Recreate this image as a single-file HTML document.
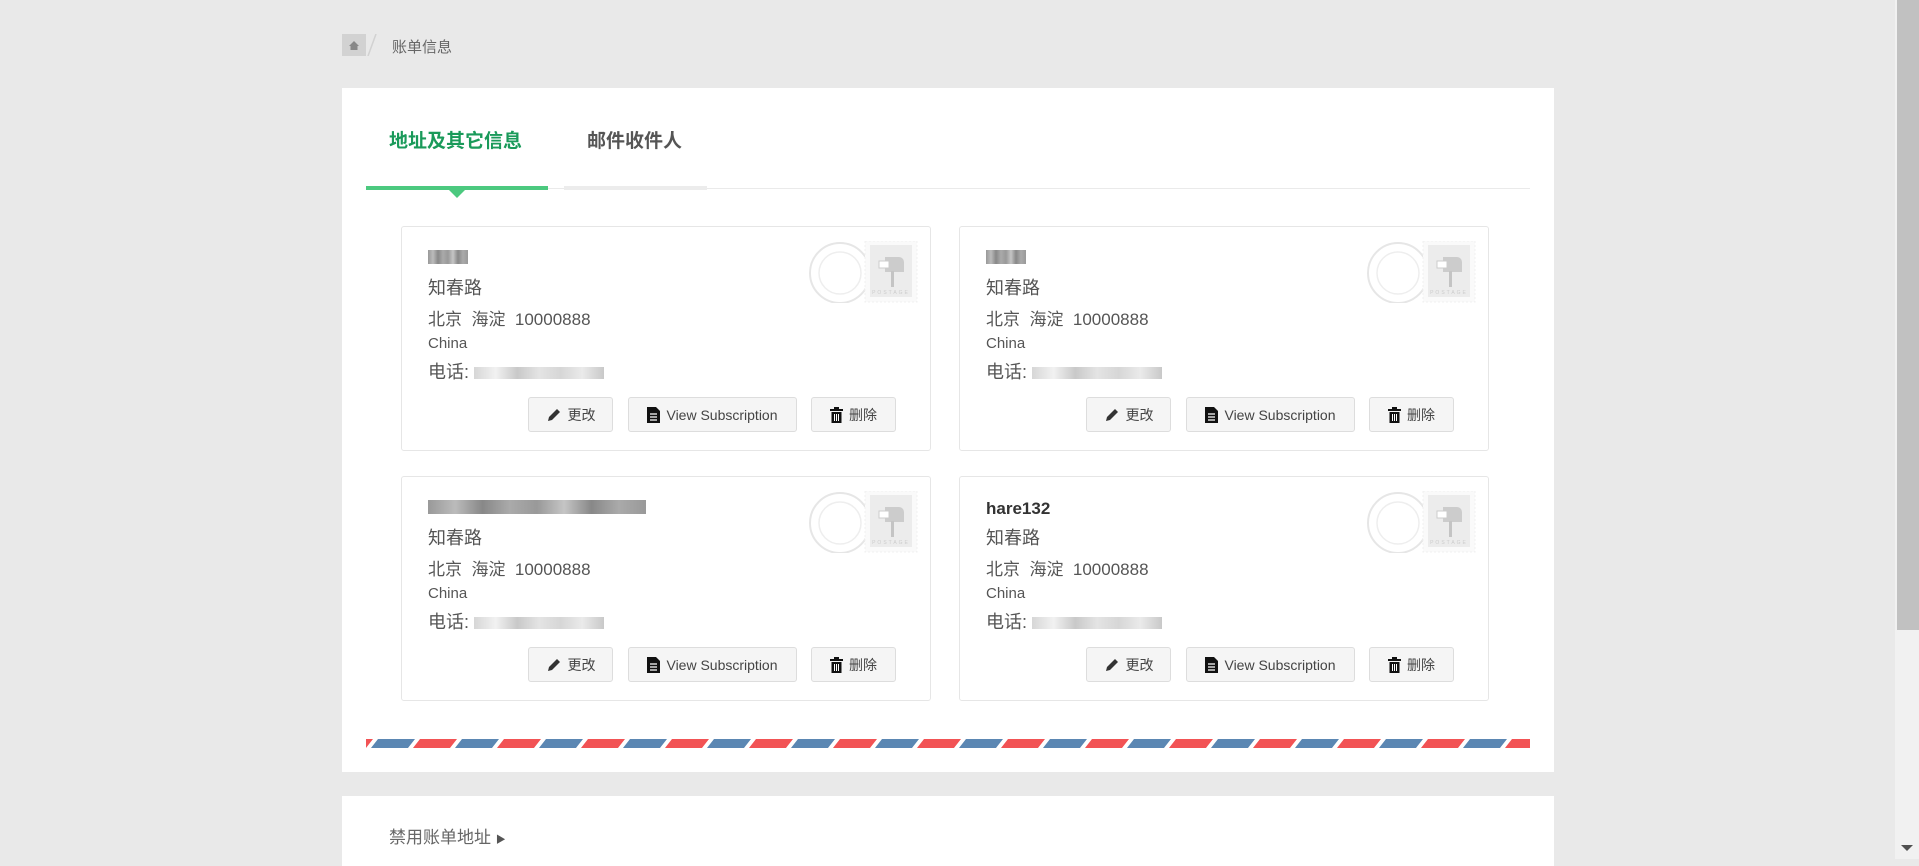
<!DOCTYPE html>
<html><head><meta charset="utf-8"><style>
*{margin:0;padding:0;box-sizing:border-box}
body{width:1919px;height:859px;overflow:hidden;background:#e9e9e9;font-family:"Liberation Sans","Noto Sans CJK SC",sans-serif;color:#555;position:relative}
.abs{position:absolute}
.home{left:342px;top:34px;width:24px;height:22px;background:#d2d2d2}
.crumb{left:392px;top:36px;font-size:15px;color:#666}
.panel{left:342px;top:88px;width:1212px;height:684px;background:#fff}
.panel2{left:342px;top:796px;width:1212px;height:70px;background:#fff}
.tab{top:126px;font-size:19px;font-weight:bold}
.card{width:530px;height:225px;border:1px solid #e6e6e6;border-radius:3px;background:#fff}
.card .t{position:absolute;left:26px;color:#555}
.btn{position:absolute;top:170px;height:35px;border:1px solid #ddd;border-radius:3px;background:#f5f5f5;font-size:14px;color:#444;display:flex;align-items:center;justify-content:center;gap:6px}
.blur{display:inline-block;height:12px;background:linear-gradient(90deg,#ccc,#eee,#bbb,#ddd,#ccc,#e5e5e5,#bbb);opacity:.8}
.nb{display:inline-block;height:14px;background:linear-gradient(90deg,#999,#bbb,#888,#aaa,#999,#c5c5c5,#888,#aaa,#999)}
.sb{left:1895px;top:0;width:24px;height:859px;background:#f1f1f1}
</style></head><body>
<div class="abs home"><svg width="24" height="22"><path d="M7 12 L12 7 L17 12 H15.5 V16 H8.5 V12 Z" fill="#888"/></svg></div>
<svg class="abs" style="left:366px;top:34px" width="12" height="22"><line x1="10" y1="0" x2="2" y2="22" stroke="#d2d2d2" stroke-width="1.5"/></svg>
<div class="abs crumb">账单信息</div>
<div class="abs panel"></div>
<div class="abs tab" style="left:389px;color:#1a9a5a">地址及其它信息</div>
<div class="abs tab" style="left:587px;color:#555">邮件收件人</div>
<div class="abs" style="left:366px;top:188px;width:1164px;height:1px;background:#eaeaea"></div>
<div class="abs" style="left:366px;top:186px;width:182px;height:4px;background:#4cc97f"></div>
<div class="abs" style="left:564px;top:186px;width:143px;height:4px;background:#ececec"></div>
<svg class="abs" style="left:448px;top:189px" width="18" height="9"><path d="M0 0 L18 0 L9 9 Z" fill="#4cc97f"/></svg>

<div id="cards"></div>
<script>
var pos=[[401,226,0],[959,226,1],[401,476,2],[959,476,3]];
var names=['<span class="nb" style="width:40px"></span>','<span class="nb" style="width:40px"></span>','<span class="nb" style="width:218px"></span>','<b style="font-size:17px;color:#333">hare132</b>'];
var h='';
pos.forEach(function(p){
h+='<div class="abs card" style="left:'+p[0]+'px;top:'+p[1]+'px">'+
'<div class="t" style="top:22px;font-size:17px">'+names[p[2]]+'</div>'+
'<div class="t" style="top:47px;font-size:18px">知春路</div>'+
'<div class="t" style="top:78px;font-size:17px">北京&nbsp; 海淀&nbsp; 10000888</div>'+
'<div class="t" style="top:108px;font-size:15px">China</div>'+
'<div class="t" style="top:131px;font-size:18px">电话: <span class="blur" style="width:130px;vertical-align:middle"></span></div>'+
'<svg style="position:absolute;left:403px;top:14px" width="118" height="62"><circle cx="35" cy="32" r="30" fill="none" stroke="#e6e6e6" stroke-width="2"/><circle cx="35" cy="32" r="21" fill="none" stroke="#eeeeee" stroke-width="1.5"/><rect x="60" y="0" width="52" height="61" fill="#fafafa" stroke="#f0f0f0" stroke-dasharray="2 2"/><rect x="65" y="4" width="42" height="52" fill="#ececec"/><path d="M80 16 h14 a5 5 0 0 1 5 5 v10 h-19z" fill="#ccc"/><rect x="86" y="30" width="3" height="16" fill="#c4c4c4"/><rect x="74" y="20" width="10" height="7" fill="#fff" stroke="#ccc"/><text x="86" y="53" font-size="5" fill="#ccc" text-anchor="middle" letter-spacing="2">POSTAGE</text></svg>'+
'<div class="btn" style="left:126px;width:85px"><svg width="16" height="16"><path d="M2 14 L3 10 L11 2 L14 5 L6 13 Z" fill="#333"/></svg>更改</div>'+
'<div class="btn" style="left:226px;width:169px"><svg width="13" height="16"><path d="M0 0 H9 L13 4 V16 H0Z" fill="#111"/><path d="M3 7h7M3 10h7M3 13h7" stroke="#fff" stroke-width="1.2"/></svg>View Subscription</div>'+
'<div class="btn" style="left:409px;width:85px"><svg width="13" height="16"><rect x="0" y="2" width="13" height="2" fill="#111"/><rect x="4" y="0" width="5" height="2" fill="#111"/><rect x="1.5" y="5" width="10" height="11" fill="#111"/><path d="M4.5 7v7M6.5 7v7M8.5 7v7" stroke="#fff" stroke-width="1"/></svg>删除</div>'+
'</div>';});
document.getElementById('cards').innerHTML=h;
</script>
<svg class="abs" style="left:366px;top:739px" width="1164" height="9"><defs><pattern id="p" width="84" height="9" patternUnits="userSpaceOnUse" x="-30" patternTransform="skewX(-38)"><rect x="0" y="0" width="37" height="9" fill="#f25355"/><rect x="42" y="0" width="37" height="9" fill="#5b87b3"/></pattern></defs><rect width="1164" height="9" fill="url(#p)"/></svg>
<div class="abs panel2"></div>
<div class="abs" style="left:389px;top:823px;font-size:17px;color:#666">禁用账单地址 <span style="font-size:10px;color:#555">▶</span></div>
<div class="abs sb"><div style="position:absolute;left:2px;top:0;width:22px;height:630px;background:#c1c1c1"></div><svg style="position:absolute;left:6px;top:845px" width="12" height="8"><path d="M0 0h12L6 6z" fill="#505050"/></svg></div>
</body></html>
